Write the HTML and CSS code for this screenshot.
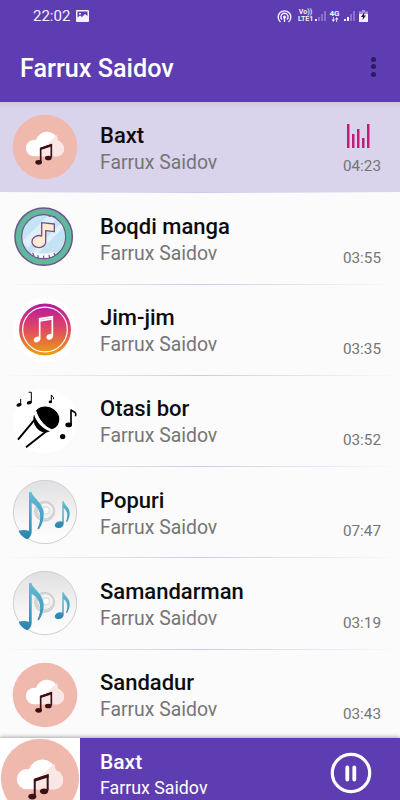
FILE: index.html
```html
<!DOCTYPE html>
<html lang="uz">
<head>
  <meta charset="UTF-8">
  <meta name="viewport" content="width=device-width, initial-scale=1.0">
  <title>Farrux Saidov</title>
  <link rel="stylesheet" href="styles.css">
</head>
<body>
  <!-- cover art, reused by the list and the player -->
  <svg class="defs" width="0" height="0">
    <defs>
      <linearGradient id="sunset" x1="0" y1="0" x2="0" y2="1">
        <stop offset="0" stop-color="#b416a0"/>
        <stop offset=".5" stop-color="#e04b62"/>
        <stop offset="1" stop-color="#eda10c"/>
      </linearGradient>
      <linearGradient id="silver" x1="0" y1="0" x2="0" y2="1">
        <stop offset="0" stop-color="#e0e0e2"/>
        <stop offset=".6" stop-color="#f5f5f5"/>
        <stop offset="1" stop-color="#fff"/>
      </linearGradient>
      <linearGradient id="blue" x1="0" y1="0" x2="0" y2="1">
        <stop offset="0" stop-color="#64bfd9"/>
        <stop offset="1" stop-color="#2b83ad"/>
      </linearGradient>
      <clipPath id="glass"><circle cx="131" cy="136" r="64"/></clipPath>
    </defs>
    <symbol id="cloud" viewBox="36 42 198 198">
      <circle cx="135" cy="141" r="97" fill="#efb9ae"/>
      <path d="M103 169a25 25 0 0 1-1-50c2 0 4 0 6 1a34 34 0 0 1 66 2c11 4 18 13 18 24 0 14-11 23-24 23z" fill="#fff"/>
      <path d="M174 122c11 4 18 13 18 24 0 14-11 23-24 23h-44l-3-20 50-44z" fill="#f9e7e5"/>
      <path d="M122 185v-39l32-11v37" fill="none" stroke="#3a1015" stroke-width="5"/>
      <path d="M120 143l36-12v8l-36 12z" fill="#3a1015"/>
      <ellipse cx="116" cy="187" rx="10" ry="7" fill="#3a1015"/>
      <ellipse cx="145" cy="174" rx="10" ry="7" fill="#3a1015"/>
    </symbol>
    <symbol id="dial" viewBox="36 41 198 198">
      <circle cx="131" cy="136" r="86" fill="#60b99d" stroke="#70538f" stroke-width="4.500"/>
      <circle cx="131" cy="136" r="66" fill="#c6e3f5" stroke="#70538f" stroke-width="3.500"/>
      <g clip-path="url(#glass)">
        <path d="M66 151l88-88 24 12-94 94zM94 184l103-103 7 14-95 95z" fill="#def0fa"/>
        <path d="M86 190l15-9q30 12 60 0l15 9-14 18h-62z" fill="#f2f8fb"/>
      </g>
      <path d="M98 186l4 7M114 193l1 8M131 194v8M147 192l2 8M162 186l4 6M146 74l5 1M161 76l5 1" stroke="#70538f" stroke-width="3.500" stroke-linecap="round"/>
      <path d="M125 94l38 4v23l-26-3v38a21 18 0 1 1-12-22z" fill="#ffebd1" stroke="#70538f" stroke-width="4" stroke-linejoin="round"/>
    </symbol>
    <symbol id="notes" viewBox="36 37.5 198 198">
      <circle cx="135" cy="136" r="97" fill="#fff"/>
      <circle cx="135" cy="135" r="78" fill="url(#sunset)"/>
      <circle cx="135" cy="135" r="67" fill="none" stroke="#fff" stroke-width="3.500"/>
      <path d="M119 164v-61l38-6v59M119 109l38-6" fill="none" stroke="#fff" stroke-width="5"/>
      <ellipse cx="111" cy="165" rx="10" ry="8" fill="#fff" transform="rotate(-30 111 165)"/>
      <ellipse cx="149" cy="157" rx="10" ry="8" fill="#fff" transform="rotate(-30 149 157)"/>
    </symbol>
    <symbol id="mic" viewBox="36 38.250 198 198">
      <circle cx="135" cy="137" r="97" fill="#fff"/>
      <path d="M102 118c8 24 26 44 48 50-17 8-32 2-41-11-9-12-11-26-7-39z"/>
      <path d="M107 106c9-13 27-17 44-11 19 8 31 25 28 41-2 15-13 26-25 27-19-8-39-29-47-57z" stroke="#fff" stroke-width="3"/>
      <path d="M104 133l-50 60M138 169l-60 47" fill="none" stroke="#000" stroke-width="6"/>
      <g fill="none" stroke="#000">
        <path d="M62 88v-17M94 80v-29h-8" stroke-width="3"/>
        <path d="M154 80v-21c1 5 9 4 6 13" stroke-width="3"/>
        <path d="M213 148v-45c3 8 20 5 13 20" stroke-width="5"/>
      </g>
      <ellipse cx="57" cy="89" rx="8" ry="5" transform="rotate(-20 57 89)"/>
      <ellipse cx="88" cy="82" rx="8" ry="5" transform="rotate(-20 88 82)"/>
      <ellipse cx="151" cy="80" rx="5" ry="4"/>
      <ellipse cx="206" cy="149" rx="10" ry="7"/>
      <circle cx="188" cy="184" r="8"/>
    </symbol>
    <symbol id="disc" viewBox="36 39 198 198">
      <circle cx="135" cy="138" r="95" fill="url(#silver)" stroke="#d0d0d2" stroke-width="3"/>
      <circle cx="134" cy="136" r="30" fill="#d5d7d9" stroke="#bcbfc1" stroke-width="2"/>
      <circle cx="136" cy="134" r="20" fill="#ededee" stroke="#fff" stroke-width="3"/>
      <circle cx="138" cy="133" r="10" fill="#fff" stroke="#ccc" stroke-width="2"/>
      <path d="M87 79l7-2c5 20 36 31 37 67 0 18-5 32-14 46l-5-2c15-29 12-62-17-78v87c0 9-5 18-13 23-11-5-22-13-26-26 11-3 20-3 31 0z" fill="url(#blue)"/>
      <path d="M187 106h4c3 13 18 17 18 36 0 10-3 18-8 26l-3-1c7-17 5-32-7-41v48c-1 8-9 13-16 12-9 0-13-7-9-13 5-7 13-9 21-6z" fill="url(#blue)"/>
    </symbol>
  </svg>

  <div class="app">
    <header class="header">
      <div class="status">
        <span class="clock">22:02</span>
        <svg class="photo" width="13" height="12" viewBox="0 0 13 12">
          <path d="M1 0h11a1 1 0 0 1 1 1v10a1 1 0 0 1-1 1H1a1 1 0 0 1-1-1V1a1 1 0 0 1 1-1zM1.500 1.500v6l2.500-2 2 1.500 3-3 2.500 2V1.500zM3 3h2v1.500H3z" fill="#f4f0fc" fill-rule="evenodd"/>
        </svg>
        <div class="status-icons">
          <svg class="hotspot" width="15" height="13" viewBox="0 0 15 13" fill="none" stroke="#f4f0fc" stroke-width="1.400">
            <path d="M3.500 12a6.300 6.300 0 1 1 8 0M5 9.500a3.600 3.600 0 1 1 5 0"/>
            <circle cx="7.500" cy="7" r=".8" fill="#f4f0fc"/>
            <path d="M7.500 7v5"/>
          </svg>
          <span class="net lte">Vo))<br>LTE1</span>
          <svg class="bars" width="11" height="12" viewBox="0 0 11 12" fill="#f4f0fc">
            <path d="M0 9h2v2H0z"/>
            <path d="M3 7h2v4H3zM6 4h2v7H6zM9 1h2v10H9z" opacity=".3"/>
          </svg>
          <div class="net data">4G
            <svg width="8" height="5" viewBox="0 0 8 6" fill="#f4f0fc"><path d="M1.500 0h1v3H4L2 6 0 3h1.500zM5.500 6h1V3H8L6 0 4 3h1.500z"/></svg>
          </div>
          <svg class="bars" width="11" height="12" viewBox="0 0 11 12" fill="#f4f0fc">
            <path d="M0 9h2v2H0zM3 7h2v4H3z"/>
            <path d="M6 4h2v7H6zM9 1h2v10H9z" opacity=".3"/>
          </svg>
          <svg class="battery" width="9" height="12" viewBox="0 0 9 12">
            <path d="M3 0h3v1.500h3V4H0V1.500h3z" fill="#a994d9"/>
            <path d="M0 4h9v8H0z" fill="#f4f0fc"/>
            <path d="M5.500 2L2 7h2L3.500 10 7 5.500H5z" fill="#21123f"/>
          </svg>
        </div>
      </div>
      <div class="toolbar">
        <h1>Farrux Saidov</h1>
        <button class="menu" aria-label="Menu"><i></i><i></i><i></i></button>
      </div>
    </header>

    <ul class="songs">
      <li class="song active">
        <svg class="cover"><use href="#cloud"/></svg>
        <div class="info"><h2>Baxt</h2><p>Farrux Saidov</p></div>
        <div class="side">
          <svg class="equalizer" width="23" height="24" viewBox="0 0 23 24" fill="#c31d7c"><path d="M0 0h2.500v24H0zM5 10h2.500v14H5zM10 5h2.500v19H10zM15 14h2.500v10H15zM20 0h2.500v24H20z"/></svg>
          <time>04:23</time>
        </div>
      </li>
      <li class="song">
        <svg class="cover"><use href="#dial"/></svg>
        <div class="info"><h2>Boqdi manga</h2><p>Farrux Saidov</p></div>
        <div class="side"><time>03:55</time></div>
      </li>
      <li class="song">
        <svg class="cover"><use href="#notes"/></svg>
        <div class="info"><h2>Jim-jim</h2><p>Farrux Saidov</p></div>
        <div class="side"><time>03:35</time></div>
      </li>
      <li class="song">
        <svg class="cover"><use href="#mic"/></svg>
        <div class="info"><h2>Otasi bor</h2><p>Farrux Saidov</p></div>
        <div class="side"><time>03:52</time></div>
      </li>
      <li class="song">
        <svg class="cover"><use href="#disc"/></svg>
        <div class="info"><h2>Popuri</h2><p>Farrux Saidov</p></div>
        <div class="side"><time>07:47</time></div>
      </li>
      <li class="song">
        <svg class="cover"><use href="#disc"/></svg>
        <div class="info"><h2>Samandarman</h2><p>Farrux Saidov</p></div>
        <div class="side"><time>03:19</time></div>
      </li>
      <li class="song">
        <svg class="cover"><use href="#cloud"/></svg>
        <div class="info"><h2>Sandadur</h2><p>Farrux Saidov</p></div>
        <div class="side"><time>03:43</time></div>
      </li>
    </ul>

    <footer class="player">
      <svg class="player-cover"><use href="#cloud"/></svg>
      <div class="player-info"><h2>Baxt</h2><p>Farrux Saidov</p></div>
      <button class="pause" aria-label="Pause">
        <svg width="42" height="42" viewBox="0 0 42 42" fill="none" stroke="#fff">
          <circle cx="21" cy="21" r="18.700" stroke-width="3.200"/>
          <path d="M17.300 15.500v12M24.300 15.500v12" stroke-width="3.800" stroke-linecap="round"/>
        </svg>
      </button>
    </footer>
  </div>
</body>
</html>
```
FILE: styles.css
```css
*{
  box-sizing: border-box;
  margin: 0;
  padding: 0;
}
body{
  font-family: Roboto, sans-serif;
  background: #fbfbfb;
}
svg{
  display: block;
  flex: none;
}
.defs{
  position: absolute;
}
button{
  border: none;
  background: none;
}
h1, h2{
  font-weight: 500;
}
.app{
  display: flex;
  flex-direction: column;
  width: 400px;
  height: 800px;
  overflow: hidden;
}

/* header */
.header{
  flex: none;
  height: 102px;
  background: #5e3db2;
  color: #fff;
}
.status{
  display: flex;
  align-items: center;
  height: 32px;
  padding: 0 32px 0 33px;
}
.clock{
  width: 43px;
  font-size: 15px;
  line-height: 32px;
  color: #f4f0fc;
}
.status-icons{
  display: flex;
  align-items: center;
  margin-left: auto;
}
.net{
  font-size: 7px;
  font-weight: 700;
  line-height: 7px;
  color: #f4f0fc;
  text-align: center;
}
.lte{
  width: 15px;
  margin: 0 2px 0 6px;
}
.data{
  width: 11px;
  margin: 0 4px 0 3px;
  font-size: 8px;
}
.data svg{
  margin: 0 auto;
}
.battery{
  margin-left: 4px;
}
.toolbar{
  display: flex;
  align-items: center;
  justify-content: space-between;
  height: 70px;
  padding: 2px 24px 0 20px;
}
.toolbar h1{
  font-size: 25.2px;
}
.menu i{
  display: block;
  width: 5px;
  height: 5px;
  margin-bottom: 2.5px;
  border-radius: 50%;
  background: #2e1a5d;
}

/* song list */
.songs{
  flex: 1;
  min-height: 0;
  list-style: none;
  overflow: hidden;
}
.song{
  display: flex;
  height: 91.25px;
  padding: 12px 19px 0 12px;
  border-bottom: 1px solid;
  border-image: linear-gradient(90deg, #fbfbfb, #cfc9ea 50%, #fbfbfb) 1;
}
.song.active{
  background: linear-gradient(#cec8df, #d9d3eb 7px);
}
.cover{
  width: 66px;
  height: 66px;
}
.info{
  flex: 1;
  margin-left: 22px;
}
.info h2{
  margin-top: 8.6px;
  font-size: 22px;
  line-height: 26px;
  color: #0d0d0f;
}
.info p{
  font-size: 19.4px;
  line-height: 28px;
  color: #757577;
}
.side{
  display: flex;
  flex-direction: column;
  align-items: flex-end;
  justify-content: flex-end;
  padding-bottom: 17px;
}
.side time{
  font-size: 15.3px;
  line-height: 18px;
  color: #757577;
}
.equalizer{
  margin: 0 11px 9px 0;
}

/* player */
.player{
  display: flex;
  flex: none;
  height: 62px;
  background: #5e3db2;
  color: #fff;
  box-shadow: 0 -1px 4px rgba(0, 0, 0, .35);
  z-index: 1;
}
.player-cover{
  width: 80px;
  height: 80px;
  background: #fff;
}
.player-info{
  flex: 1;
  padding: 11px 0 0 20px;
}
.player-info h2{
  font-size: 21px;
  line-height: 26px;
}
.player-info p{
  font-size: 17.8px;
  line-height: 25px;
}
.pause{
  width: 42px;
  height: 42px;
  margin: 14px 28px 0 0;
}
```
